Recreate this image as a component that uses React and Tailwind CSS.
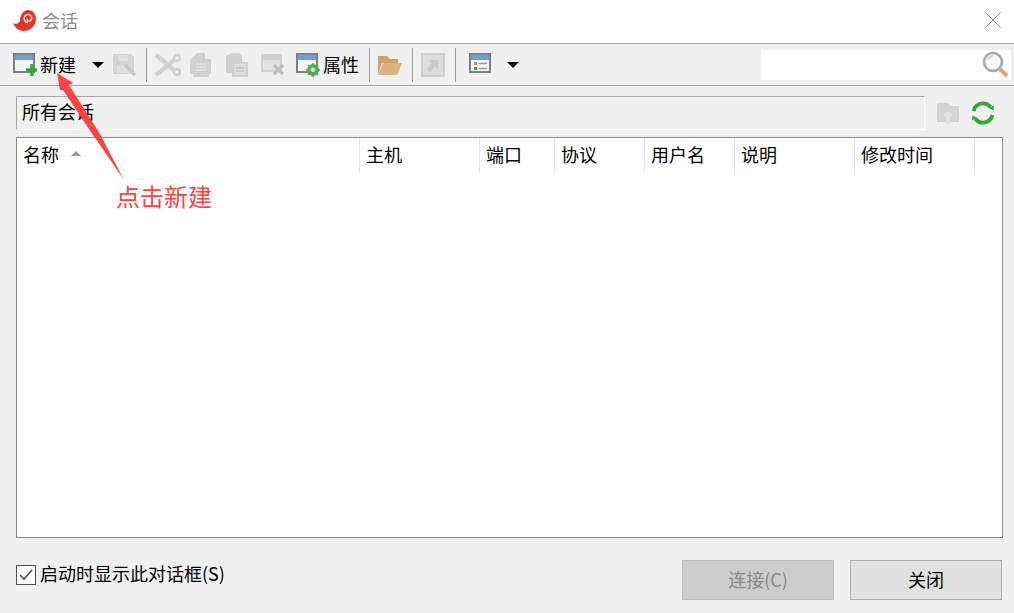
const font = { fontFamily: '"Noto Sans CJK SC", "Liberation Sans", sans-serif' };

const G = "#d0d0d0";

function Sep({ className = "" }) {
  return <div className={"w-px h-[34px] bg-[#9a9a9a] shrink-0 " + className} />;
}

function Caret({ className = "" }) {
  return (
    <svg width="12" height="6" viewBox="0 0 12 6" className={"shrink-0 " + className}>
      <path d="M0 0H12L6 6Z" fill="#000" />
    </svg>
  );
}

function WinIcon({ children, className = "" }) {
  return (
    <svg width="24" height="24" viewBox="0 0 24 24" className={"shrink-0 blur-[0.3px] " + className}>
      <rect x="1" y="1" width="20" height="18" fill="#f4f4f4" stroke="#7f7f7f" strokeWidth="2" />
      <rect x="2" y="2" width="18" height="5" fill="#6d9fd8" />
      {children}
    </svg>
  );
}

function Save({ className = "" }) {
  return (
    <svg width="24" height="24" viewBox="0 0 24 24" className={"shrink-0 blur-[0.6px] " + className}>
      <path d="M1 1H19L22 4V21H1Z" fill="#d4d4d4" />
      <rect x="6" y="2" width="10" height="6" fill="#e0e0e0" />
      <rect x="5" y="12" width="13" height="8" fill="#e0e0e0" />
      <path d="M13 12L23 22" stroke="#c6c6c6" strokeWidth="3.5" />
    </svg>
  );
}

function Scissors({ className = "" }) {
  return (
    <svg width="26" height="24" viewBox="0 0 26 24" className={"shrink-0 blur-[0.6px] " + className}>
      <path d="M1 2L19 17M1 22L19 7" stroke={G} strokeWidth="4.5" fill="none" />
      <circle cx="22" cy="5" r="3" fill="none" stroke={G} strokeWidth="2.5" />
      <circle cx="22" cy="19" r="3" fill="none" stroke={G} strokeWidth="2.5" />
    </svg>
  );
}

function Copy({ className = "" }) {
  return (
    <svg width="22" height="24" viewBox="0 0 22 24" className={"shrink-0 blur-[0.6px] " + className}>
      <path d="M7 0H15V6H21V21H19V24H3V21H0V7Z" fill={G} />
      <path d="M6 11H16M6 14H16M6 17H16" stroke="#e4e4e4" strokeWidth="1.5" />
    </svg>
  );
}

function Paste({ className = "" }) {
  return (
    <svg width="22" height="24" viewBox="0 0 22 24" className={"shrink-0 blur-[0.6px] " + className}>
      <path d="M0 3L6 0H13L16 3V9H22V24H6V20H0Z" fill={G} />
      <rect x="8" y="11" width="12" height="11" fill="#dedede" />
      <path d="M10 15H18M10 18H18" stroke="#c4c4c4" strokeWidth="1.5" />
    </svg>
  );
}

function Remove({ className = "" }) {
  return (
    <svg width="24" height="24" viewBox="0 0 24 24" className={"shrink-0 blur-[0.6px] " + className}>
      <rect x="0" y="1" width="21" height="18" fill={G} />
      <rect x="2" y="7" width="17" height="10" fill="#e2e2e2" />
      <path d="M13 12L22 21M22 12L13 21" stroke="#bdbdbd" strokeWidth="3.5" />
    </svg>
  );
}

function Folder({ className = "" }) {
  return (
    <svg width="24" height="22" viewBox="0 0 24 22" className={"shrink-0 blur-[0.4px] " + className}>
      <path d="M0 2H9L12 5H20V9H4L0 20Z" fill="#cfa46c" />
      <path d="M5 9H24L19 21H0Z" fill="#dcb27e" />
    </svg>
  );
}

function Jump({ className = "" }) {
  return (
    <svg width="24" height="24" viewBox="0 0 24 24" className={"shrink-0 blur-[0.5px] " + className}>
      <rect x="1" y="1" width="22" height="22" fill="#dcdcdc" stroke={G} strokeWidth="2" />
      <path d="M8 7H17V16L14 13L9 19L6 16L11 10Z" fill="#c8c8c8" />
    </svg>
  );
}

function UploadFolder({ className = "" }) {
  return (
    <svg width="24" height="24" viewBox="0 0 24 24" className={"shrink-0 blur-[0.5px] " + className}>
      <path d="M1 2H12L15 5H23V21H1Z" fill="#d4d4d4" />
      <path d="M12 10L17 15H14V23H10V15H7Z" fill="#e2e2e2" />
    </svg>
  );
}

function Refresh({ className = "" }) {
  return (
    <svg width="26" height="26" viewBox="0 0 26 26" className={"shrink-0 blur-[0.3px] " + className}>
      <path d="M3.6 11A9.6 9.6 0 0 1 20.5 7" fill="none" stroke="#2ea836" strokeWidth="3.8" />
      <path d="M18.5 8L23.5 10.5L24 5.5Z" fill="#2ea836" />
      <path d="M22.4 15A9.6 9.6 0 0 1 5.5 19" fill="none" stroke="#2ea836" strokeWidth="3.8" />
      <path d="M7.5 18L2.5 15.5L2 20.5Z" fill="#2ea836" />
    </svg>
  );
}

function SearchIcon({ className = "" }) {
  return (
    <svg width="27" height="27" viewBox="0 0 27 27" className={"shrink-0 " + className}>
      <circle cx="11" cy="11" r="9" fill="#f7f7f7" stroke="#a8a8a8" strokeWidth="2.6" />
      <path d="M6 9A6 6 0 0 1 11 5" fill="none" stroke="#d6d6d6" strokeWidth="2" />
      <path d="M18 18L25 25" stroke="#d9a873" strokeWidth="4" />
    </svg>
  );
}

function Logo() {
  return (
    <svg width="24" height="24" viewBox="0 0 24 24" className="shrink-0">
      <path d="M1 13C4 15 6 14 8 11C8 4 12 0 16 0C21 0 24 4 24 9C24 16 18 21 12 21C7 21 3 18 1 13Z" fill="#e5352b" />
      <path d="M16 12.5C12 12.5 11 7 14 5C18 3 21 7 19 10C18 12 15 11 15 8.8" fill="none" stroke="#fbd5d0" strokeWidth="1.5" />
    </svg>
  );
}

const columns = [
  ["w-[343px]", "名称", true],
  ["w-[120px]", "主机"],
  ["w-[75px]", "端口"],
  ["w-[90px]", "协议"],
  ["w-[90px]", "用户名"],
  ["w-[120px]", "说明"],
  ["w-[120px]", "修改时间"],
];

export default function App() {
  return (
    <div style={font} className="relative w-[1014px] h-[613px] overflow-hidden bg-[#f0f0f0] text-[18px] leading-none text-black">
      {/* title bar */}
      <div className="h-[44px] bg-white border-b border-[#a6a6a6] flex items-center pl-[12px] pr-[13px]">
        <Logo />
        <span className="ml-[6px] pb-[4px] text-[#8c8c8c]">会话</span>
        <svg width="16" height="16" viewBox="0 0 16 16" className="ml-auto mb-[3px]">
          <path d="M0.5 0.5L15.5 15.5M15.5 0.5L0.5 15.5" stroke="#8a8a8a" strokeWidth="1" />
        </svg>
      </div>

      {/* toolbar */}
      <div className="h-[42px] border-b border-[#a6a6a6] flex items-center pl-[13px]">
        <WinIcon>
          <path d="M19 11V23M13 17H24" stroke="#2ea836" strokeWidth="3.4" />
        </WinIcon>
        <span className="ml-[3px] pb-[2px]">新建</span>
        <Caret className="ml-[16px]" />
        <Save className="ml-[8px]" />
        <Sep className="ml-[10px]" />
        <Scissors className="ml-[8px]" />
        <Copy className="ml-[9px]" />
        <Paste className="ml-[14px]" />
        <Remove className="ml-[13px]" />
        <WinIcon className="ml-[11px]">
          <circle cx="17" cy="17" r="4.5" fill="none" stroke="#4cae50" strokeWidth="3" />
          <path d="M17 10V24M10 17H24M12 12L22 22M22 12L12 22" stroke="#4cae50" strokeWidth="1.6" />
          <circle cx="17" cy="17" r="2" fill="#f4f4f4" />
        </WinIcon>
        <span className="ml-[3px] pb-[2px]">属性</span>
        <Sep className="ml-[10px]" />
        <Folder className="ml-[8px]" />
        <Sep className="ml-[10px]" />
        <Jump className="ml-[8px]" />
        <Sep className="ml-[10px]" />
        <WinIcon className="ml-[13px]">
          <rect x="5" y="9" width="3" height="3" fill="#e77" />
          <rect x="5" y="14" width="3" height="3" fill="#3a3" />
          <path d="M10 10.5H18M10 15.5H18" stroke="#999" strokeWidth="1.4" />
        </WinIcon>
        <Caret className="ml-[14px]" />
        <div className="ml-auto mr-[3px] w-[250px] h-[30px] bg-white flex items-center justify-end pr-[2px]">
          <SearchIcon />
        </div>
      </div>

      {/* path row */}
      <div className="mt-[10px] ml-[16px] flex items-center">
        <div className="w-[909px] h-[34px] border border-t-[#a6a6a6] border-l-[#a6a6a6] border-r-white border-b-white flex items-center pl-[5px] pb-[4px]">
          所有会话
        </div>
        <UploadFolder className="ml-[11px]" />
        <Refresh className="ml-[10px]" />
      </div>

      {/* list */}
      <div className="mt-[7px] ml-[16px] w-[987px] h-[401px] bg-white border border-[#8a8a8a]">
        <div className="h-[34px] flex items-stretch">
          {columns.map(([w, label, sorted]) => (
            <div key={label} className={w + " border-r border-[#e4e4e4] flex items-center pl-[6px] pb-[3px] shrink-0"}>
              <span>{label}</span>
              {sorted && (
                <svg width="10" height="5" viewBox="0 0 10 5" className="ml-[12px]">
                  <path d="M0 5H10L5 0Z" fill="#9a9a9a" />
                </svg>
              )}
            </div>
          ))}
        </div>
      </div>

      {/* footer */}
      <div className="mt-[22px] ml-[16px] mr-[12px] flex items-start">
        <label className="mt-[4px] flex items-center">
          <span className="w-[20px] h-[20px] border border-[#4d4d4d] bg-white flex items-center justify-center">
            <svg width="14" height="12" viewBox="0 0 14 12">
              <path d="M1 6L5 10L13 1" fill="none" stroke="#4d4d4d" strokeWidth="1.6" />
            </svg>
          </span>
          <span className="ml-[4px] pb-[3px]">启动时显示此对话框(S)</span>
        </label>
        <button className="ml-auto w-[152px] h-[40px] bg-[#cccccc] border border-[#bfbfbf] text-[#8a8a8a] flex items-center justify-center pb-[2px]">
          连接(C)
        </button>
        <button className="ml-[16px] w-[152px] h-[40px] bg-[#e1e1e1] border border-[#adadad] flex items-center justify-center pb-[2px]">
          关闭
        </button>
      </div>

      {/* annotation overlay */}
      <svg width="140" height="120" viewBox="0 0 140 120" className="absolute left-0 top-[68px] pointer-events-none">
        <path d="M57 5L73 15L69 17L100 66L124 112L91 64L63 22L60 22Z" fill="#f64545" />
      </svg>
      <span className="absolute left-[116px] top-[184px] text-[24px] leading-[24px] text-[#f64545]">点击新建</span>
    </div>
  );
}
